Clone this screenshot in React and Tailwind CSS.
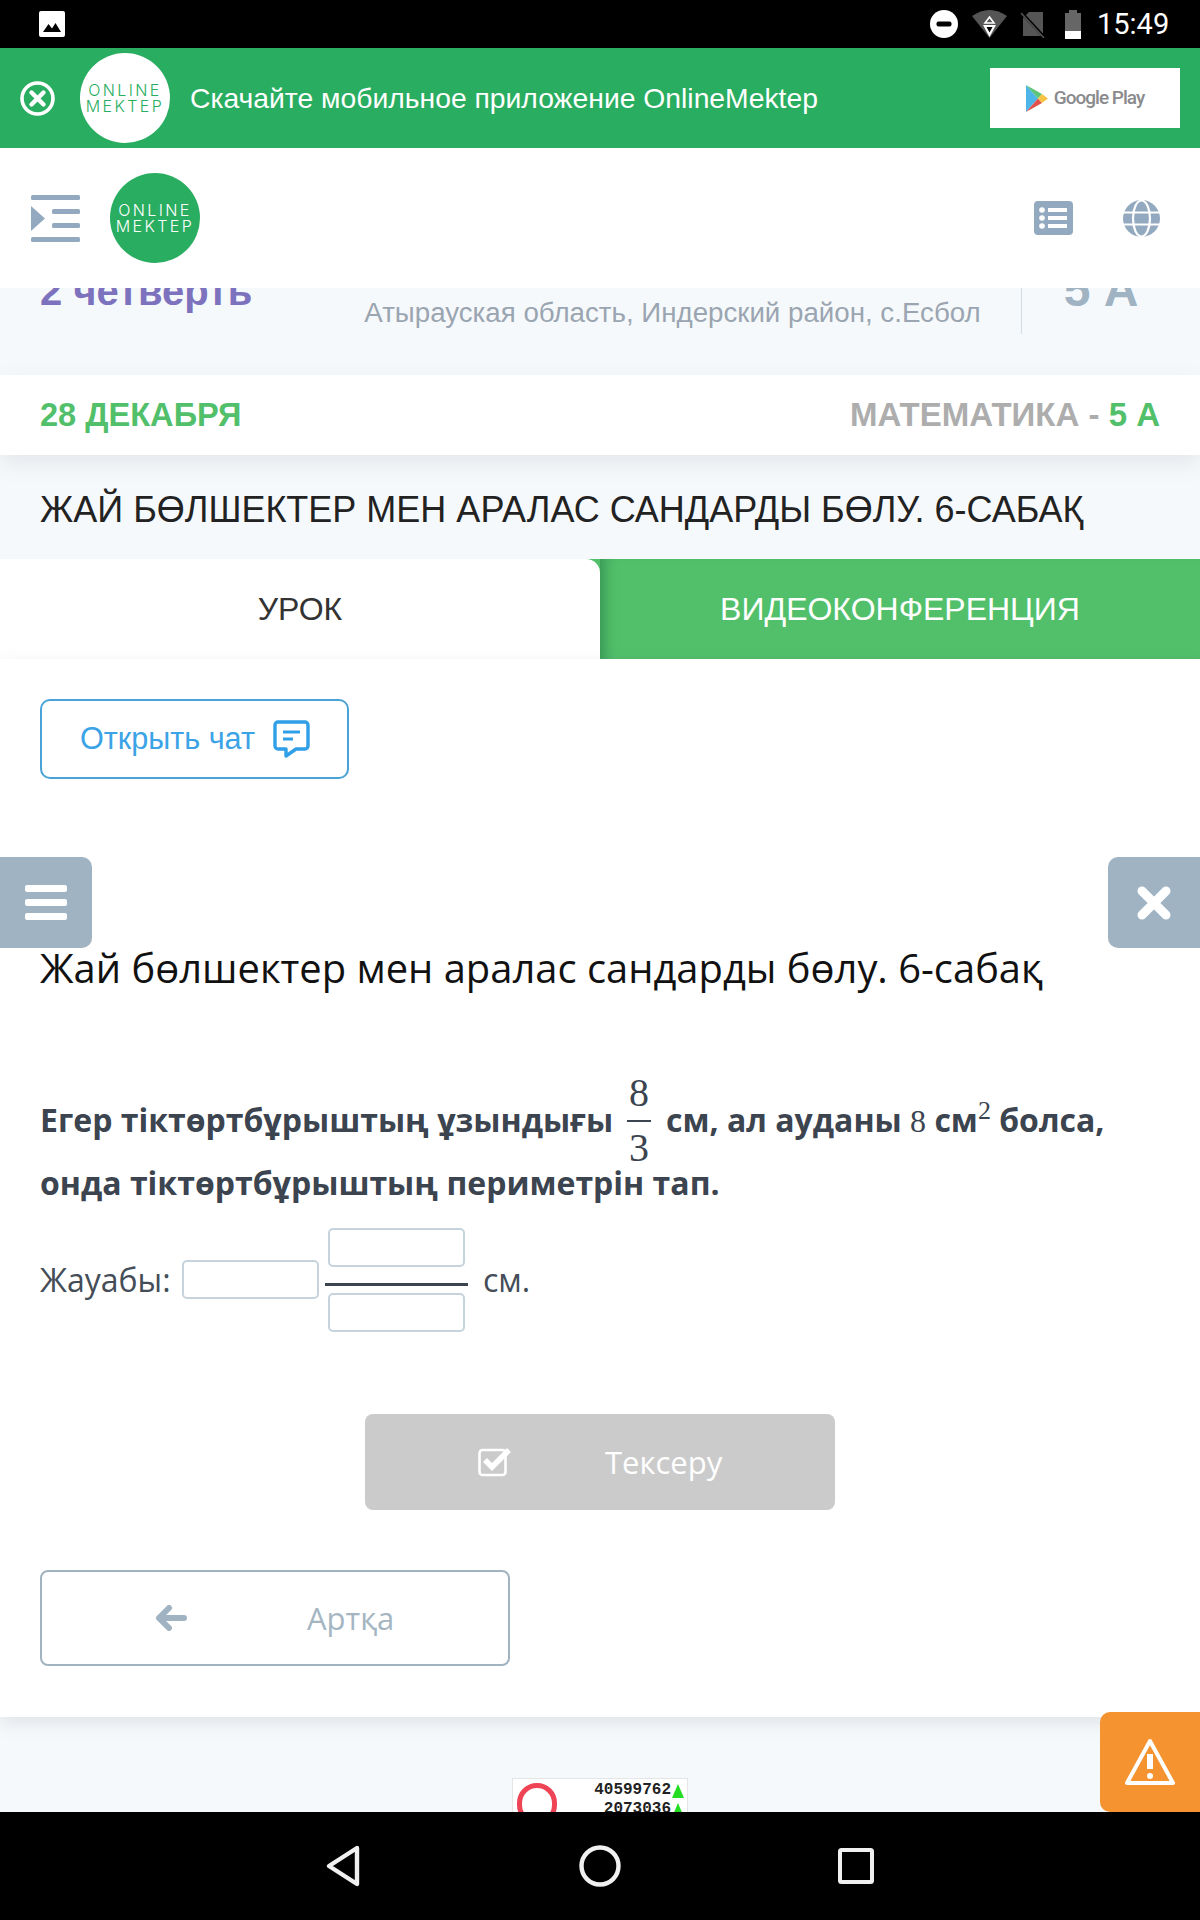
import React from "react";

const OS = "font-['Open_Sans',sans-serif]";
const LS = "font-['Liberation_Sans',Arial,sans-serif]";

function Logo({ circle, text }) {
  return (
    <div className={`w-[90px] h-[90px] rounded-full flex flex-col items-center justify-center ${circle} ${text} font-['Inter',sans-serif] font-light text-[16px] leading-[16px] tracking-[2.4px] shrink-0`}>
      <span>ONLINE</span>
      <span>MEKTEP</span>
    </div>
  );
}

function StatusBar() {
  return (
    <div className="h-[48px] bg-black flex items-center shrink-0 pl-[39px] pr-[33px]">
      <svg width="26" height="26" viewBox="0 0 26 26"><rect width="26" height="26" rx="2" fill="#fff" /><path d="M4 21 L9.5 13 L13 17.5 L16.5 12 L22 21 Z" fill="#000" /></svg>
      <div className="flex-1" />
      <svg width="28" height="28" viewBox="0 0 28 28" className="mr-[14px]"><circle cx="14" cy="14" r="14" fill="#fff" /><rect x="6.5" y="11.5" width="15" height="5" rx="2" fill="#000" /></svg>
      <svg width="35" height="28" viewBox="0 0 35 28" className="mr-[13px]">
        <path d="M0 6 Q17.5 -6 35 6 L17.5 28 Z" fill="#555" />
        <path d="M17.5 7 L22 13 H13 Z" fill="none" stroke="#fff" strokeWidth="1.6" />
        <path d="M11 15 H24 L17.5 27 Z" fill="#fff" />
        <path d="M14.5 17 H20.5 L17.5 22.5 Z" fill="#000" />
      </svg>
      <svg width="25" height="27" viewBox="0 0 25 27" className="mr-[20px]">
        <path d="M9 1 H23 V25 H3 V7 Z" fill="#555" />
        <path d="M0 0 L25 27" stroke="#000" strokeWidth="3" />
        <path d="M1 2 L24 27" stroke="#555" strokeWidth="1.5" />
      </svg>
      <div className="w-[16px] h-[29px] flex flex-col items-center mr-[16px]">
        <div className="w-[8px] h-[3px] bg-[#666]" />
        <div className="w-[16px] flex-1 bg-[#666]" />
        <div className="w-[16px] h-[8px] bg-white" />
      </div>
      <span className="text-white font-['Roboto',sans-serif] text-[29px] leading-[48px] w-[70px] whitespace-nowrap">15:49</span>
    </div>
  );
}

function Banner() {
  return (
    <div className="h-[100px] bg-[#29ad60] flex items-center shrink-0 pl-[20px] pr-[20px]">
      <svg width="35" height="35" viewBox="0 0 35 35" className="mr-[25px]">
        <circle cx="17.5" cy="17.5" r="15.5" fill="none" stroke="#fff" strokeWidth="3.6" />
        <path d="M11.5 11.5 L23.5 23.5 M23.5 11.5 L11.5 23.5" stroke="#fff" strokeWidth="4.4" strokeLinecap="round" />
      </svg>
      <Logo circle="bg-white" text="text-[#29ad60]" />
      <span className={`ml-[20px] text-white text-[28.3px] ${LS} whitespace-nowrap`}>Скачайте мобильное приложение OnlineMektep</span>
      <div className="flex-1" />
      <div className="w-[190px] h-[60px] bg-white flex items-center justify-center gap-[6px]">
        <svg width="22" height="27" viewBox="0 0 22 27">
          <path d="M0 0 L12 13.5 L0 27 Z" fill="#4db5e8" />
          <path d="M0 0 L16 9 L12 13.5 Z" fill="#5ec47a" />
          <path d="M0 27 L16 18 L12 13.5 Z" fill="#e2504a" />
          <path d="M16 9 L22 13.5 L16 18 L12 13.5 Z" fill="#f6c344" />
        </svg>
        <span className="font-['Roboto',sans-serif] text-[#8a8a8d] text-[19px] font-medium tracking-[-1px] whitespace-nowrap">Google Play</span>
      </div>
    </div>
  );
}

function Header() {
  const c = "#93a9bf";
  return (
    <div className="h-[140px] bg-white flex items-center shrink-0 pl-[31px] pr-[40px] relative z-10">
      <svg width="49" height="47" viewBox="0 0 49 47" className="mr-[30px]">
        <rect x="0" y="0" width="49" height="5" rx="1.5" fill={c} />
        <rect x="21" y="14" width="28" height="5" rx="1.5" fill={c} />
        <rect x="21" y="28" width="28" height="5" rx="1.5" fill={c} />
        <rect x="0" y="42" width="49" height="5" rx="1.5" fill={c} />
        <path d="M0 11 L14 23.5 L0 36 Z" fill={c} />
      </svg>
      <Logo circle="bg-[#29ad60]" text="text-white" />
      <div className="flex-1" />
      <svg width="39" height="34" viewBox="0 0 39 34" className="mr-[50px]">
        <rect width="39" height="34" rx="4" fill={c} />
        <circle cx="8" cy="9" r="2.8" fill="#fff" /><circle cx="8" cy="17" r="2.8" fill="#fff" /><circle cx="8" cy="25" r="2.8" fill="#fff" />
        <rect x="14" y="7" width="19" height="4" fill="#fff" /><rect x="14" y="15" width="19" height="4" fill="#fff" /><rect x="14" y="23" width="19" height="4" fill="#fff" />
      </svg>
      <svg width="37" height="37" viewBox="0 0 37 37">
        <circle cx="18.5" cy="18.5" r="18.5" fill={c} />
        <ellipse cx="18.5" cy="18.5" rx="8.5" ry="18" fill="none" stroke="#fff" strokeWidth="2.2" />
        <path d="M0 12.5 H37 M0 24.5 H37" stroke="#fff" strokeWidth="2.2" />
      </svg>
    </div>
  );
}

function InfoBand() {
  return (
    <div className={`h-[87px] bg-[#f6f9fb] overflow-hidden shrink-0 flex items-start pl-[40px] ${LS}`}>
      <span className="font-bold text-[40px] leading-[44px] text-[#7d72bd] -mt-[19px] whitespace-nowrap">2 четверть</span>
      <span className="ml-[112px] text-[27.7px] leading-[34px] text-[#9aa5b1] mt-[8px] whitespace-nowrap">Атырауская область, Индерский район, с.Есбол</span>
      <div className="ml-[40px] w-px h-[46px] bg-[#d5dde3]" />
      <span className="ml-[42px] font-bold text-[48px] leading-[52px] text-[#9fb3c3] -mt-[24px] whitespace-nowrap">5 А</span>
    </div>
  );
}

function DateRow() {
  return (
    <div className={`h-[80px] bg-white shrink-0 flex items-center justify-between px-[40px] font-bold text-[33px] shadow-[0_8px_20px_rgba(120,135,150,0.15)] relative z-[1] ${LS}`}>
      <span className="text-[#52c06b] text-[32.6px]">28 ДЕКАБРЯ</span>
      <span className="text-[#adadad]">МАТЕМАТИКА - <span className="text-[#52c06b]">5 А</span></span>
    </div>
  );
}

function TitleBand() {
  return (
    <div className={`h-[104px] bg-[#f6f9fb] shrink-0 flex items-center pt-[5px] px-[40px] text-[36px] text-[#222] whitespace-nowrap ${LS}`}>
      ЖАЙ БӨЛШЕКТЕР МЕН АРАЛАС САНДАРДЫ БӨЛУ. 6-САБАҚ
    </div>
  );
}

function Tabs() {
  return (
    <div className={`h-[100px] bg-[#52c06b] shrink-0 flex text-[32px] ${LS}`}>
      <div className="w-[600px] bg-white rounded-tr-[14px] flex items-center justify-center text-[#333]">УРОК</div>
      <div className="w-[600px] flex items-center justify-center text-white shadow-[inset_14px_0_14px_-10px_rgba(30,110,60,0.55)]">ВИДЕОКОНФЕРЕНЦИЯ</div>
    </div>
  );
}

function Fraction() {
  return (
    <span className="inline-flex flex-col items-center align-[26px] w-[24px] ml-[14px] mr-[15px] -my-[40px] font-['Liberation_Serif',serif] font-normal text-[40px] leading-[48px] text-[#3b444f]">
      <span>8</span>
      <span className="w-full h-[2px] bg-[#3b444f] my-[2.5px]" />
      <span>3</span>
    </span>
  );
}

function Box() {
  return <div className="w-[137px] h-[39px] border-2 border-[#c5d4dc] rounded-[5px] bg-white" />;
}

function Content() {
  return (
    <div className="h-[1058px] bg-white shrink-0 px-[40px] pt-[40px] shadow-[0_6px_16px_rgba(120,135,150,0.18)] relative z-[1]">
      <div className={`w-[309px] h-[80px] border-2 border-[#4aa3d6] rounded-[10px] flex items-center pl-[38px] text-[30.6px] text-[#3ba3e6] ${LS}`}>
        <span className="whitespace-nowrap">Открыть чат</span>
        <svg width="37" height="38" viewBox="0 0 37 38" className="ml-[18px]">
          <path d="M5 2 H32 A3 3 0 0 1 35 5 V26 A3 3 0 0 1 32 29 H23 L13 36 V29 H5 A3 3 0 0 1 2 26 V5 A3 3 0 0 1 5 2 Z" fill="none" stroke="#2f9fe8" strokeWidth="3.4" strokeLinejoin="round" />
          <path d="M10 12 H27 M10 19 H20" stroke="#2f9fe8" strokeWidth="3.2" />
        </svg>
      </div>
      <h1 className={`mt-[163px] text-[39.9px] leading-[52px] font-normal text-[#111] whitespace-nowrap ${OS}`}>Жай бөлшектер мен аралас сандарды бөлу. 6-сабақ</h1>
      <p className={`mt-[95px] text-[32px] leading-[62px] font-bold text-[#3b444f] whitespace-nowrap ${OS}`}>
        Егер тіктөртбұрыштың ұзындығы<Fraction />см, ал ауданы <span className="font-['Liberation_Serif',serif] font-normal">8</span> см<sup className="font-['Liberation_Serif',serif] font-normal text-[26px] leading-[0]">2</sup> болса,<br />
        онда тіктөртбұрыштың периметрін тап.
      </p>
      <div className={`mt-[14px] flex items-center text-[32px] text-[#444d57] ${OS}`}>
        <span className="w-[142px] whitespace-nowrap">Жауабы:</span>
        <div className="-mt-[2px]"><Box /></div>
        <div className="ml-[6px] w-[143px] flex flex-col items-center">
          <Box />
          <div className="w-full h-[3px] bg-[#3b444f] mt-[16px] mb-[7px]" />
          <Box />
        </div>
        <span className="ml-[15px]">см.</span>
      </div>
      <div className="mt-[82px] flex justify-center">
        <div className={`w-[470px] h-[96px] bg-[#cbcbcb] rounded-[8px] flex items-center pl-[113px] text-[31px] text-white ${OS}`}>
          <svg width="34" height="30" viewBox="0 0 34 30">
            <rect x="1.5" y="3" width="26" height="25" rx="3" fill="none" stroke="#fff" strokeWidth="2.6" />
            <path d="M7 13 L14 20 L31 3" fill="none" stroke="#fff" strokeWidth="5.5" />
          </svg>
          <span className="ml-[93px]">Тексеру</span>
        </div>
      </div>
      <div className={`mt-[60px] w-[470px] h-[96px] border-2 border-[#a0b3bf] rounded-[8px] flex items-center pl-[113px] text-[31px] text-[#a5b6c2] ${OS}`}>
        <svg width="32" height="26" viewBox="0 0 32 26">
          <path d="M14 3 L4 13 L14 23" fill="none" stroke="#9fb3c3" strokeWidth="6" strokeLinecap="round" strokeLinejoin="round" />
          <path d="M5 13 H29" stroke="#9fb3c3" strokeWidth="6" strokeLinecap="round" />
        </svg>
        <span className="ml-[120px]">Артқа</span>
      </div>
    </div>
  );
}

function Footer() {
  return (
    <div className="flex-1 bg-[#f6f9fb] overflow-hidden flex justify-center pt-[61px]">
      <div className="w-[176px] h-[60px] bg-white border border-[#e5e5e5] relative flex flex-col items-end pt-[2px] pr-[3px] font-['Liberation_Mono',monospace] font-bold text-[16px] leading-[19px] text-[#222] shrink-0">
        <div className="absolute left-[4px] top-[4px] w-[40px] h-[42px] rounded-full border-[5px] border-[#ee4455]" />
        <span className="flex items-center">40599762<span className="ml-[1px] w-0 h-0 border-x-[6px] border-x-transparent border-b-[14px] border-b-[#22dd22]" /></span>
        <span className="flex items-center">2073036<span className="ml-[1px] w-0 h-0 border-x-[6px] border-x-transparent border-b-[14px] border-b-[#22dd22]" /></span>
      </div>
    </div>
  );
}

function NavBar() {
  return (
    <div className="h-[108px] bg-black shrink-0 flex items-center justify-center relative z-20">
      <svg width="36" height="44" viewBox="0 0 36 44" className="mr-[218px] -ml-[2px]"><path d="M32 4 L4 22 L32 40 Z" fill="none" stroke="#f0f0f0" strokeWidth="4.4" strokeLinejoin="round" /></svg>
      <svg width="42" height="42" viewBox="0 0 42 42" className="mr-[217px]"><circle cx="21" cy="21" r="18.5" fill="none" stroke="#f0f0f0" strokeWidth="4.4" /></svg>
      <svg width="36" height="36" viewBox="0 0 36 36"><rect x="2" y="2" width="32" height="32" rx="1.5" fill="none" stroke="#f0f0f0" strokeWidth="4" /></svg>
    </div>
  );
}

export default function App() {
  return (
    <div className="relative w-[1200px] h-[1920px] overflow-hidden flex flex-col bg-white">
      <StatusBar />
      <Banner />
      <Header />
      <InfoBand />
      <DateRow />
      <TitleBand />
      <Tabs />
      <Content />
      <Footer />
      <NavBar />

      <div className="absolute left-0 top-[857px] w-[92px] h-[91px] bg-[#9fb3c3] rounded-r-[10px] z-10 flex flex-col justify-center gap-[7px] pl-[25px]">
        <div className="w-[42px] h-[7px] bg-white rounded-[2px]" />
        <div className="w-[42px] h-[7px] bg-white rounded-[2px]" />
        <div className="w-[42px] h-[7px] bg-white rounded-[2px]" />
      </div>
      <div className="absolute right-0 top-[857px] w-[92px] h-[91px] bg-[#9fb3c3] rounded-l-[10px] z-10 flex items-center justify-center">
        <svg width="36" height="36" viewBox="0 0 36 36"><path d="M6 6 L30 30 M30 6 L6 30" stroke="#fff" strokeWidth="9" strokeLinecap="round" /></svg>
      </div>
      <div className="absolute right-0 top-[1712px] w-[100px] h-[100px] bg-[#f59331] rounded-l-[10px] z-10 flex items-center justify-center">
        <svg width="52" height="48" viewBox="0 0 52 48">
          <path d="M26 3 L49 45 H3 Z" fill="none" stroke="#fff" strokeWidth="4" strokeLinejoin="round" />
          <path d="M26 16 V31" stroke="#fff" strokeWidth="6" />
          <circle cx="26" cy="38" r="3" fill="#fff" />
        </svg>
      </div>
    </div>
  );
}
